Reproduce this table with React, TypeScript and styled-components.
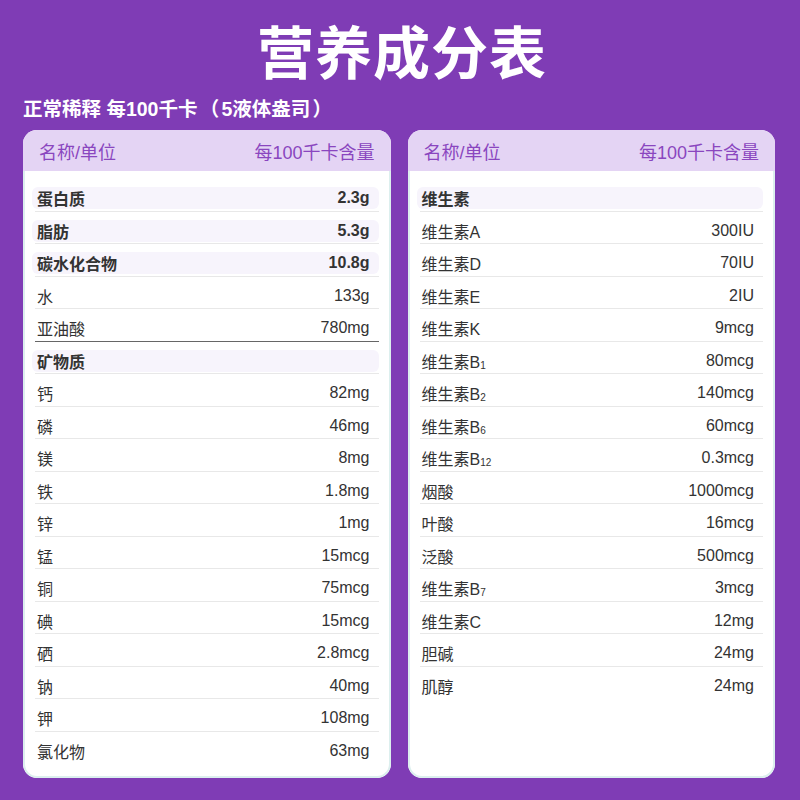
import styled, { createGlobalStyle } from "styled-components";

const GlobalStyle = createGlobalStyle`
  html, body {
    margin: 0;
    padding: 0;
    background: #7f3cb5;
  }
  body {
    font-family: "Liberation Sans", "Noto Sans CJK SC", sans-serif;
    text-spacing-trim: space-all;
  }
`;

const Page = styled.div`
  width: 800px;
  height: 800px;
  box-sizing: border-box;
  background: #7f3cb5;
  padding: 20px 25px 0 23px;
  overflow: hidden;
`;

const Title = styled.h1`
  margin: 0;
  height: 58px;
  line-height: 58px;
  text-align: center;
  color: #fff;
  font-family: "Noto Sans CJK SC", sans-serif;
  font-size: 57px;
  font-weight: 700;
  letter-spacing: 1px;
  padding-left: 6px;
`;

const Subtitle = styled.h2`
  margin: 17px 0 9px;
  height: 26px;
  line-height: 26px;
  color: #fff;
  font-size: 19.5px;
  font-weight: 700;
`;

const Paren = styled.span`
  display: inline-block;
  width: 24px;
  text-align: center;
  font-family: "Noto Sans CJK SC", sans-serif;
  font-weight: 700;
`;

const Columns = styled.div`
  display: grid;
  grid-template-columns: 1fr 1fr;
  gap: 17px;
  align-items: start;
`;

const Card = styled.section`
  border-radius: 14px;
  overflow: hidden;
  background: #fff;
`;

const CardHeader = styled.div`
  height: 41px;
  display: flex;
  align-items: center;
  justify-content: space-between;
  padding: 0 16px;
  background: #e4d4f4;
  color: #8a46bf;
  font-size: 18px;
`;

const CardBody = styled.div`
  box-sizing: border-box;
  height: 607px;
  border: 2px solid #dcefee;
  border-top: none;
  border-radius: 0 0 14px 14px;
  padding: 8px 10px 12px;
`;

const Row = styled.div<{ $dark?: boolean }>`
  height: 32.5px;
  box-sizing: border-box;
  padding-top: 8px;
  border-bottom: 1px solid ${(p) => (p.$dark ? "#666" : "#e8e8e8")};

  &:last-child {
    border-bottom-color: transparent;
  }
`;

const RowInner = styled.div<{ $bold?: boolean }>`
  height: 22px;
  display: flex;
  align-items: center;
  justify-content: space-between;
  margin-left: -3px;
  padding: 0 9px 0 5px;
  border-radius: 6px;
  background: ${(p) => (p.$bold ? "#f7f4fc" : "transparent")};
  color: #333;
  font-size: 16px;
  font-weight: ${(p) => (p.$bold ? 700 : 400)};
`;

const Sub = styled.span`
  font-size: 10px;
  vertical-align: -1px;
`;

type Item = {
  name: string;
  sub?: string;
  value?: string;
  bold?: boolean;
  dark?: boolean;
};

const left: Item[] = [
  { name: "蛋白质", value: "2.3g", bold: true },
  { name: "脂肪", value: "5.3g", bold: true },
  { name: "碳水化合物", value: "10.8g", bold: true },
  { name: "水", value: "133g" },
  { name: "亚油酸", value: "780mg", dark: true },
  { name: "矿物质", bold: true },
  { name: "钙", value: "82mg" },
  { name: "磷", value: "46mg" },
  { name: "镁", value: "8mg" },
  { name: "铁", value: "1.8mg" },
  { name: "锌", value: "1mg" },
  { name: "锰", value: "15mcg" },
  { name: "铜", value: "75mcg" },
  { name: "碘", value: "15mcg" },
  { name: "硒", value: "2.8mcg" },
  { name: "钠", value: "40mg" },
  { name: "钾", value: "108mg" },
  { name: "氯化物", value: "63mg" },
];

const right: Item[] = [
  { name: "维生素", bold: true },
  { name: "维生素A", value: "300IU" },
  { name: "维生素D", value: "70IU" },
  { name: "维生素E", value: "2IU" },
  { name: "维生素K", value: "9mcg" },
  { name: "维生素B", sub: "1", value: "80mcg" },
  { name: "维生素B", sub: "2", value: "140mcg" },
  { name: "维生素B", sub: "6", value: "60mcg" },
  { name: "维生素B", sub: "12", value: "0.3mcg" },
  { name: "烟酸", value: "1000mcg" },
  { name: "叶酸", value: "16mcg" },
  { name: "泛酸", value: "500mcg" },
  { name: "维生素B", sub: "7", value: "3mcg" },
  { name: "维生素C", value: "12mg" },
  { name: "胆碱", value: "24mg" },
  { name: "肌醇", value: "24mg" },
];

const NutrientCard = ({ items }: { items: Item[] }) => (
  <Card>
    <CardHeader>
      <span>名称/单位</span>
      <span>每100千卡含量</span>
    </CardHeader>
    <CardBody>
      {items.map((it, i) => (
        <Row key={i} $dark={it.dark}>
          <RowInner $bold={it.bold}>
            <span>
              {it.name}
              {it.sub && <Sub>{it.sub}</Sub>}
            </span>
            <span>{it.value}</span>
          </RowInner>
        </Row>
      ))}
    </CardBody>
  </Card>
);

export default function App() {
  return (
    <Page>
      <GlobalStyle />
      <Title>营养成分表</Title>
      <Subtitle>
        正常稀释 每100千卡<Paren>（</Paren>5液体盎司<Paren>）</Paren>
      </Subtitle>
      <Columns>
        <NutrientCard items={left} />
        <NutrientCard items={right} />
      </Columns>
    </Page>
  );
}
